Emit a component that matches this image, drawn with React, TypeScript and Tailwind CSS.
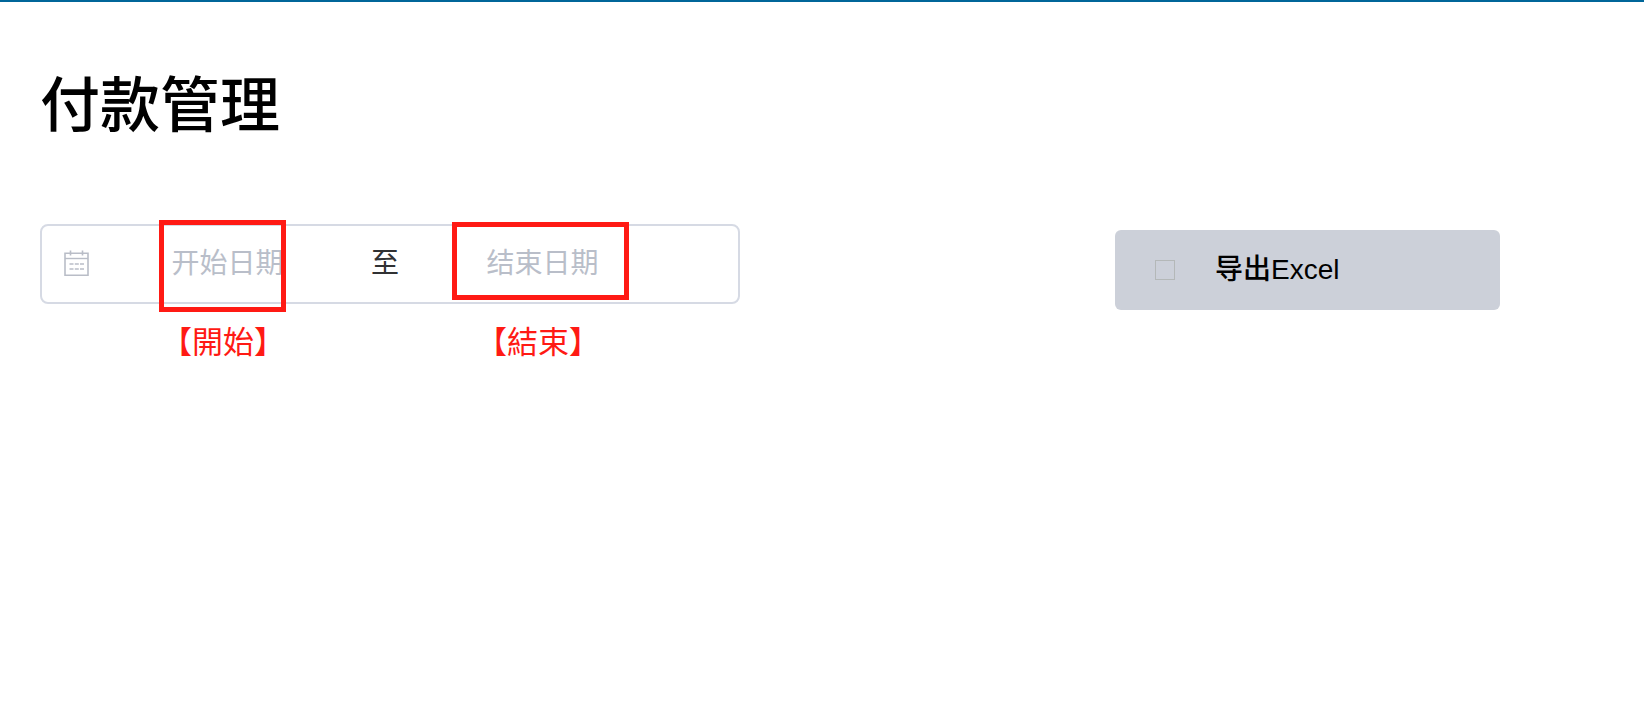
import { useState } from 'react'

interface DateFieldProps {
  label: string
  placeholder: string
  value: string
  onChange: (value: string) => void
  children: React.ReactNode
}

export default function App() {
  const [start, setStart] = useState('')
  const [end, setEnd] = useState('')

  return (
    <main className="min-h-screen border-t-2 border-[#006699] bg-white pl-10 pr-36 font-['Liberation_Sans','Noto_Sans_CJK_SC',sans-serif] text-black">
      <h1 className="pt-17 text-[60px] font-medium leading-[74px]">付款管理</h1>

      <div className="mt-20 flex items-start justify-between">
        <div className="flex h-20 w-[700px] items-center rounded-lg border-2 border-[#d6dae4] pl-5 pr-15 text-[28px]">
          <CalendarIcon />

          <DateField label="开始日期" placeholder="开始日期" value={start} onChange={setStart}>
            <span className="pointer-events-none absolute -top-1.5 left-[67px] h-[92px] w-[127px] border-5 border-[#ff1a14]" />
            <Note>【開始】</Note>
          </DateField>

          <span className="w-11 shrink-0 text-center text-[#303133]">至</span>

          <DateField label="结束日期" placeholder="结束日期" value={end} onChange={setEnd}>
            <span className="pointer-events-none absolute -top-1 left-[45px] h-[78px] w-[177px] border-5 border-[#ff1a14]" />
            <Note>【結束】</Note>
          </DateField>
        </div>

        <button
          type="button"
          className="mt-1.5 flex h-20 w-[385px] items-center gap-10 rounded-md bg-[#ccd0d9] pl-10 text-[28px] font-medium"
        >
          <span className="size-5 border border-[#b4b8b8]" />
          <span>导出Excel</span>
        </button>
      </div>
    </main>
  )
}

function DateField({ label, placeholder, value, onChange, children }: DateFieldProps) {
  return (
    <div className="relative h-full min-w-0 flex-1">
      <input
        type="text"
        aria-label={label}
        placeholder={placeholder}
        value={value}
        onChange={(e) => onChange(e.target.value)}
        className="h-full w-full bg-transparent text-center outline-none placeholder:text-[#b9bec9]"
      />
      {children}
    </div>
  )
}

function Note({ children }: { children: React.ReactNode }) {
  return (
    <span className="pointer-events-none absolute left-[69px] top-[94px] whitespace-nowrap font-['Noto_Sans_CJK_TC',sans-serif] text-[31px] leading-10 text-[#ff1a14]">
      {children}
    </span>
  )
}

function CalendarIcon() {
  return (
    <svg width="30" height="30" viewBox="0 0 30 30" fill="none" stroke="#b9bdc7" className="shrink-0" aria-hidden="true">
      <path d="M3 4.2h23v22H3z" strokeWidth="1.6" />
      <path d="M3 9.5h23" strokeWidth="1.4" />
      <path d="M8.5 1.5v5M20.5 1.5v5" strokeWidth="1.6" />
      <path d="M7.5 15h4M12.8 15h4M18 15h4M7.5 20h4M12.8 20h4M18 20h4" strokeWidth="1.6" />
    </svg>
  )
}
